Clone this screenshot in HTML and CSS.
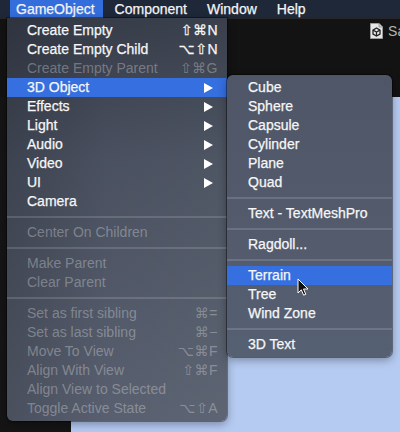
FILE: index.html
```html
<!DOCTYPE html>
<html>
<head>
<meta charset="utf-8">
<link rel="stylesheet" href="styles.css">
</head>
<body>
<div class="screen">
  <div class="menubar">
    <span class="mb-item active">GameObject</span>
    <span class="mb-item">Component</span>
    <span class="mb-item">Window</span>
    <span class="mb-item">Help</span>
  </div>
  <div class="workspace">
    <div class="toolbar">
      <svg class="unity-doc" width="13" height="16" viewBox="0 0 13 16">
        <path d="M0.5 0.5 H9 L12.5 4 V15.5 H0.5 Z" fill="#e6e6e6" stroke="#9a9a9a" stroke-width="1"/>
        <path d="M9 0.5 V4 H12.5" fill="#cfcfcf" stroke="#9a9a9a" stroke-width="1"/>
        <g fill="none" stroke="#222" stroke-width="1.3">
          <path d="M6.5 5 L10 7.2 V11 L6.5 13 L3 11 V7.2 Z"/>
          <path d="M6.5 9 L10 7.2 M6.5 9 L3 7.2 M6.5 9 V13"/>
        </g>
      </svg>
      <span class="tb-label">Save</span>
    </div>
    <div class="lower">
      <div class="left-dark"></div>
      <div class="scene"></div>
    </div>
  </div>

  <div class="menu main-menu">
    <div class="item"><span>Create Empty</span><span class="sc">⇧⌘N</span></div>
    <div class="item"><span>Create Empty Child</span><span class="sc">⌥⇧N</span></div>
    <div class="item disabled"><span>Create Empty Parent</span><span class="sc">⇧⌘G</span></div>
    <div class="item hl"><span>3D Object</span><svg class="arrow" width="9" height="10" viewBox="0 0 9 10"><path d="M0 0 L9 5 L0 10 Z" fill="#fff"/></svg></div>
    <div class="item"><span>Effects</span><svg class="arrow" width="9" height="10" viewBox="0 0 9 10"><path d="M0 0 L9 5 L0 10 Z" fill="#fff"/></svg></div>
    <div class="item"><span>Light</span><svg class="arrow" width="9" height="10" viewBox="0 0 9 10"><path d="M0 0 L9 5 L0 10 Z" fill="#fff"/></svg></div>
    <div class="item"><span>Audio</span><svg class="arrow" width="9" height="10" viewBox="0 0 9 10"><path d="M0 0 L9 5 L0 10 Z" fill="#fff"/></svg></div>
    <div class="item"><span>Video</span><svg class="arrow" width="9" height="10" viewBox="0 0 9 10"><path d="M0 0 L9 5 L0 10 Z" fill="#fff"/></svg></div>
    <div class="item"><span>UI</span><svg class="arrow" width="9" height="10" viewBox="0 0 9 10"><path d="M0 0 L9 5 L0 10 Z" fill="#fff"/></svg></div>
    <div class="item"><span>Camera</span></div>
    <div class="sep"></div>
    <div class="item disabled"><span>Center On Children</span></div>
    <div class="sep"></div>
    <div class="item disabled"><span>Make Parent</span></div>
    <div class="item disabled"><span>Clear Parent</span></div>
    <div class="sep"></div>
    <div class="item disabled"><span>Set as first sibling</span><span class="sc">⌘=</span></div>
    <div class="item disabled"><span>Set as last sibling</span><span class="sc">⌘−</span></div>
    <div class="item disabled"><span>Move To View</span><span class="sc">⌥⌘F</span></div>
    <div class="item disabled"><span>Align With View</span><span class="sc">⇧⌘F</span></div>
    <div class="item disabled"><span>Align View to Selected</span></div>
    <div class="item disabled"><span>Toggle Active State</span><span class="sc">⌥⇧A</span></div>
  </div>

  <div class="menu sub-menu">
    <div class="item"><span>Cube</span></div>
    <div class="item"><span>Sphere</span></div>
    <div class="item"><span>Capsule</span></div>
    <div class="item"><span>Cylinder</span></div>
    <div class="item"><span>Plane</span></div>
    <div class="item"><span>Quad</span></div>
    <div class="sep"></div>
    <div class="item"><span>Text - TextMeshPro</span></div>
    <div class="sep"></div>
    <div class="item"><span>Ragdoll...</span></div>
    <div class="sep"></div>
    <div class="item hl"><span>Terrain</span></div>
    <div class="item"><span>Tree</span></div>
    <div class="item"><span>Wind Zone</span></div>
    <div class="sep"></div>
    <div class="item"><span>3D Text</span></div>
  </div>

  <svg class="cursor" width="12" height="19" viewBox="0 0 12 19">
    <path d="M1 1 L1 15 L4.3 11.8 L6.6 17.2 L8.8 16.3 L6.5 11 L11 11 Z" fill="#111" stroke="#fff" stroke-width="1" stroke-linejoin="round"/>
  </svg>
</div>
</body>
</html>
```

FILE: styles.css
```css
* { box-sizing: border-box; }
html, body { margin: 0; padding: 0; background: #141414; }
.screen {
  position: relative;
  width: 400px;
  height: 432px;
  overflow: hidden;
  font-family: "Liberation Sans", "DejaVu Sans", sans-serif;
  font-size: 14px;
  color: #f4f4f4;
}
.menubar {
  height: 18px;
  display: flex;
  align-items: stretch;
  gap: 6px;
  padding-left: 10px;
  background: #1e2839;
}
.mb-item {
  padding: 0 8px 0 6px;
  line-height: 18px;
  -webkit-text-stroke: 0.25px #f4f4f4;
}
.mb-item.active { background: #346ddc; }

.workspace {
  display: flex;
  flex-direction: column;
  height: 414px;
}
.toolbar {
  height: 79px;
  background: #131313;
  border-top: 1px solid #262626;
  display: flex;
  justify-content: flex-end;
  align-items: flex-start;
  padding-top: 4px;
  gap: 5px;
  margin-right: -20px;
}
.unity-doc { flex: none; }
.tb-label {
  color: #b5b5b5;
  line-height: 17px;
  font-size: 14px;
}
.lower {
  flex: 1;
  display: flex;
}
.left-dark {
  width: 71px;
  background: #151515;
}
.scene {
  flex: 1;
  background: #b6cbf2;
}

.menu {
  position: absolute;
  padding: 3px 0;
  display: flex;
  flex-direction: column;
}
.main-menu {
  left: 7px;
  top: 18px;
  width: 220px;
  border-radius: 0 0 6px 6px;
  background:
    linear-gradient(180deg, rgba(20,24,32,0.45) 0%, rgba(20,24,32,0.15) 35%, rgba(255,255,255,0.03) 100%),
    linear-gradient(90deg, #444a58 0%, #535a6a 45%, #58606f 100%);
  box-shadow: 0 3px 10px rgba(0,0,0,0.35), 0 0 0 1px rgba(0,0,0,0.35);
}
.sub-menu {
  left: 227px;
  top: 75px;
  width: 165px;
  border-radius: 6px;
  background: linear-gradient(180deg, #4e5668 0%, #535b6d 60%, #566073 100%);
  box-shadow: 0 3px 10px rgba(0,0,0,0.35), 0 0 0 1px rgba(0,0,0,0.4);
}
.item {
  height: 19px;
  line-height: 19px;
  display: flex;
  align-items: center;
  justify-content: space-between;
  padding: 0 9px 0 20px;
  white-space: nowrap;
  color: #f6f6f6;
  -webkit-text-stroke: 0.25px #f6f6f6;
}
.sub-menu .item { padding-left: 21px; }
.item.disabled {
  color: rgba(255,255,255,0.3);
  -webkit-text-stroke: 0;
}
.item.hl { background: #356fe0; }
.sc {
  font-family: "Liberation Sans", "DejaVu Sans", sans-serif;
  letter-spacing: 0.5px;
}
.arrow { margin-right: 5px; }
.sep {
  height: 12px;
  display: flex;
  align-items: center;
}
.sep::before {
  content: "";
  display: block;
  width: 100%;
  height: 2px;
  background: rgba(255,255,255,0.14);
}
.cursor {
  position: absolute;
  left: 297px;
  top: 278px;
}
```
